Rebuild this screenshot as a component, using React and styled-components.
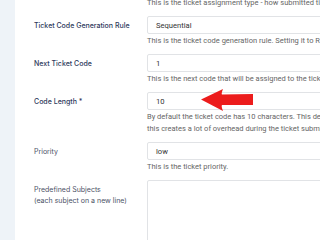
import React from 'react'
import styled, { createGlobalStyle } from 'styled-components'

const GlobalStyle = createGlobalStyle`
  html, body {
    margin: 0;
    padding: 0;
    background: #eef3f8;
    overflow: hidden;
  }
`

const fields = [
  {
    label: 'Ticket Code Generation Rule',
    value: 'Sequential',
    help: ['This is the ticket code generation rule. Setting it to Random will generate random codes.'],
  },
  {
    label: 'Next Ticket Code',
    value: '1',
    help: ['This is the next code that will be assigned to the ticket when it is submitted.'],
  },
  {
    label: 'Code Length *',
    value: '10',
    arrow: true,
    help: [
      'By default the ticket code has 10 characters. This depends on how many tickets you expect,',
      'this creates a lot of overhead during the ticket submission process.',
    ],
  },
  {
    label: 'Priority',
    value: 'low',
    muted: true,
    help: ['This is the ticket priority.'],
  },
]

const Arrow = () => (
  <ArrowMark viewBox="0 0 52 22" width="52" height="22">
    <path d="M0 10.5 L22 0 Q20 5 21 5.5 L52 5 L52 16 L21 16 Q20 17 22 22 Z" fill="#ec1c1c" />
  </ArrowMark>
)

const App = () => (
  <>
    <GlobalStyle />
    <Panel>
      <Row>
        <span />
        <Help $first>This is the ticket assignment type - how submitted tickets are assigned to staff members.</Help>
      </Row>
      {fields.map(field => (
        <Row key={field.label}>
          <Label $muted={field.muted}>{field.label}</Label>
          <Control>
            <Input>
              {field.value}
              {field.arrow && <Arrow />}
            </Input>
            <Help>
              {field.help.map(line => (
                <div key={line}>{line}</div>
              ))}
            </Help>
          </Control>
        </Row>
      ))}
      <Row>
        <Label $muted>
          Predefined Subjects
          <br />
          (each subject on a new line)
        </Label>
        <TextArea />
      </Row>
    </Panel>
  </>
)

export default App

const Panel = styled.div`
  margin-left: 15px;
  min-height: 226px;
  background: #ffffff;
  padding-left: 19px;
  overflow: hidden;
`

const Row = styled.div`
  display: grid;
  grid-template-columns: 113px 420px;
  align-items: start;
`

const Label = styled.div`
  padding-top: 4px;
  font-family: Inter, 'Noto Sans', sans-serif;
  font-size: 7px;
  line-height: 11px;
  font-weight: ${p => (p.$muted ? 400 : 500)};
  color: ${p => (p.$muted ? '#4b5166' : '#2e3a5c')};
`

const Control = styled.div`
  display: flex;
  flex-direction: column;
`

const Input = styled.div`
  position: relative;
  box-sizing: border-box;
  height: 18px;
  padding-left: 8px;
  display: flex;
  align-items: center;
  border: 1px solid #e1e3e6;
  border-radius: 2px;
  background: #ffffff;
  font-family: Roboto, 'Liberation Sans', sans-serif;
  font-size: 7.6px;
  color: #333333;
`

const ArrowMark = styled.svg`
  position: absolute;
  left: 53px;
  top: -4px;
`

const Help = styled.div`
  margin-top: ${p => (p.$first ? '-3px' : '1px')};
  margin-bottom: 7px;
  font-family: Roboto, 'Liberation Sans', sans-serif;
  font-size: 7.5px;
  line-height: 12px;
  color: #666666;
  white-space: nowrap;
`

const TextArea = styled.div`
  box-sizing: border-box;
  height: 90px;
  border: 1px solid #e1e3e6;
  border-radius: 2px;
  background: #ffffff;
`
